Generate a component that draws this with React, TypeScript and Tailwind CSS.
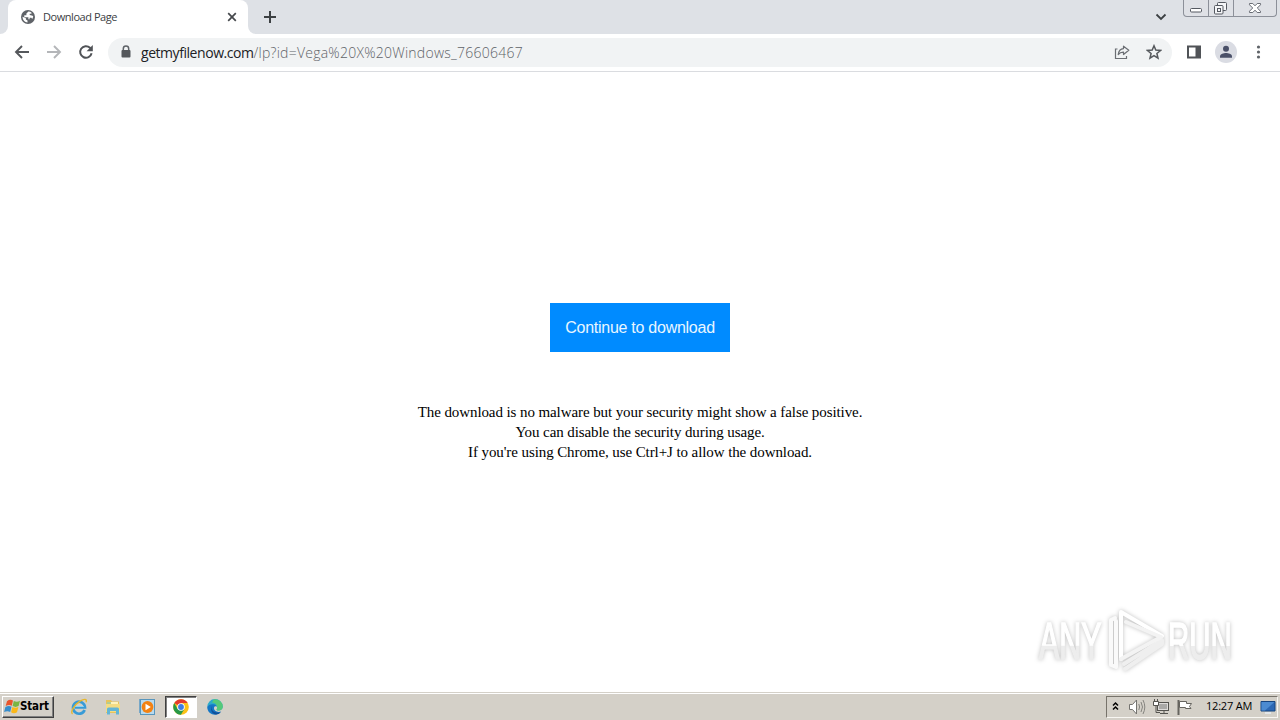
import type { ReactNode } from "react";

interface IconProps {
  size?: number;
  className?: string;
  children: ReactNode;
}

const Icon = ({ size = 16, className = "", children }: IconProps) => (
  <svg
    width={size}
    height={size}
    viewBox={`0 0 ${size} ${size}`}
    className={`block shrink-0 ${className}`}>
    {children}
  </svg>
);

const TabStrip = () => (
  <div className="flex h-[34px] bg-[#dee1e6]">
    <div className="flex w-2 bg-white">
      <div className="w-full rounded-br-lg bg-[#dee1e6]" />
    </div>
    <div className="flex w-60 items-center rounded-t-lg bg-white pl-3">
      <Icon className="-mt-px">
        <circle cx="8" cy="8" r="7" fill="#5f6368" />
        <path
          d="M8.4 2.6 6.4 4.5v1.7H4.3v2h4.1v2.1h1.2v-1.6h1.8l.8 1.2A5.4 5.4 0 0 0 13.2 7l-1.5-.4-2-.6V4.8h1.7l.2-1A5.4 5.4 0 0 0 8.4 2.6ZM2.6 7.7v1.1a5.5 5.5 0 0 0 4.9 4.6v-1.8l-1.6-1V9.2Z"
          fill="#fff"
        />
      </Icon>
      <span className="ml-[7px] w-[182px] whitespace-nowrap font-['Open_Sans',sans-serif] text-[11px] tracking-[-0.45px] text-[#3c4043]">
        Download Page
      </span>
      <Icon size={14} className="-mt-px">
        <path d="m3.2 3.2 7.6 7.6m0-7.6-7.6 7.6" stroke="#45484c" strokeWidth="1.7" />
      </Icon>
    </div>
    <div className="flex w-2 bg-white">
      <div className="w-full rounded-bl-lg bg-[#dee1e6]" />
    </div>
    <Icon className="ml-1.5 mt-[9px] mr-auto">
      <path d="M8 2v12M2 8h12" stroke="#3c4043" strokeWidth="2" />
    </Icon>
    <Icon size={14} className="mr-[15px] mt-2.5">
      <path d="m2.5 4.5 4.5 4.5 4.5-4.5" fill="none" stroke="#3c4043" strokeWidth="1.8" />
    </Icon>
    <WindowControls />
  </div>
);

const WindowControls = () => (
  <div className="mr-[3px] flex h-[17px] w-[94px] rounded-b-[4px] border border-t-0 border-[#8c9099] bg-[#dfe1e6]">
    <div className="w-[25px] border-r border-[#8c9099]">
      <svg width="24" height="16" className="block">
        <rect x="6.5" y="8.5" width="11" height="3.5" rx="1" fill="#fff" stroke="#555961" />
      </svg>
    </div>
    <div className="w-[25px] border-r border-[#8c9099]">
      <svg width="24" height="16" className="block" fill="#f5f6f8" stroke="#555961">
        <rect x="8.5" y="2.5" width="9" height="8" rx="1" />
        <rect x="5.5" y="5.5" width="8.5" height="8.5" rx="1" />
        <rect x="8.5" y="8.5" width="3" height="3" />
      </svg>
    </div>
    <svg width="42" height="16" className="block">
      <path
        d="M15.5 3.5h3.3l2.2 2.3 2.2-2.3h3.3v1.3L23.3 8l3.2 3.2v1.3h-3.3L21 10.2l-2.2 2.3h-3.3v-1.3L18.7 8l-3.2-3.2z"
        fill="#fff"
        stroke="#686c74"
      />
    </svg>
  </div>
);

const Toolbar = () => (
  <div className="flex h-[38px] items-center border-b border-[#dadce0] bg-white pl-3.5 pr-3.5">
    <Icon className="-mt-px mr-4">
      <path d="M15 8H2m6-6L2 8l6 6" fill="none" stroke="#55585c" strokeWidth="1.9" />
    </Icon>
    <Icon className="-mt-px mr-4">
      <path d="M1 8h13M8 2l6 6-6 6" fill="none" stroke="#b4b6b9" strokeWidth="1.9" />
    </Icon>
    <Icon className="-mt-px mr-3.5">
      <path d="M13.6 9.3A5.8 5.8 0 1 1 12 3.8L13.5 5" fill="none" stroke="#505357" strokeWidth="2" />
      <path d="M14.8 1v6.2H8.6z" fill="#505357" />
    </Icon>
    <div className="flex h-[29px] w-[1064px] items-center rounded-full bg-[#f1f3f4] pl-2.5 pr-2.5">
      <Icon className="-mt-px">
        <path d="M5.3 7V4.8a2.7 2.7 0 0 1 5.4 0V7" fill="none" stroke="#5f6368" strokeWidth="1.5" />
        <rect x="3.5" y="6" width="9" height="7.5" rx="1" fill="#55585c" />
      </Icon>
      <span className="ml-[7px] mr-auto whitespace-nowrap font-['Open_Sans',sans-serif] text-[14px] font-light tracking-[0.25px] text-[#5f6368]">
        <span className="font-normal tracking-[-0.45px] text-[#202124]">getmyfilenow.com</span>
        /lp?id=Vega%20X%20Windows_76606467
      </span>
      <Icon className="-mt-px mr-4">
        <path d="M3.5 5H1.5v9.5h11V12" fill="none" stroke="#6b6e73" strokeWidth="1.2" />
        <path
          d="M9.5 2.2 14.8 6.3 9.5 10.5V8.1C7.3 8 5.5 8.9 4.2 10.6 4.6 7.3 6.3 4.9 9.5 4.6Z"
          fill="none"
          stroke="#6b6e73"
          strokeWidth="1.2"
          strokeLinejoin="round"
        />
      </Icon>
      <Icon className="-mt-px">
        <path
          d="m8 1.8 1.8 4.3 4.7.4-3.6 3 1.1 4.6L8 11.6l-4 2.5 1.1-4.6-3.6-3 4.7-.4z"
          fill="none"
          stroke="#55585c"
          strokeWidth="1.5"
        />
      </Icon>
    </div>
    <Icon className="-mt-px ml-3.5">
      <path d="M1 1.5h14v13H1zM3 3.5v9h6.5v-9z" fill="#505357" fillRule="evenodd" />
    </Icon>
    <Icon size={22} className="-mt-px ml-[13px]">
      <circle cx="11" cy="11" r="11" fill="#dadce3" />
      <circle cx="11" cy="7.8" r="3" fill="#4a5068" />
      <path d="M5 16.8v-1.4c0-2.3 3.8-3.3 6-3.3s6 1 6 3.3v1.4z" fill="#4a5068" />
    </Icon>
    <Icon className="-mt-px ml-[13px]">
      <g fill="#5f6368">
        <circle cx="8.5" cy="3" r="1.6" />
        <circle cx="8.5" cy="8" r="1.6" />
        <circle cx="8.5" cy="13" r="1.6" />
      </g>
    </Icon>
  </div>
);

const Watermark = () => (
  <svg
    width="210"
    height="76"
    viewBox="1030 603 210 76"
    className="absolute right-10 bottom-[13px] drop-shadow-[0_0_2px_rgba(0,0,0,0.25)]">
    <defs>
      <linearGradient id="wm-fill" x1="0" y1="0" x2="0" y2="1">
        <stop offset="0.58" stopColor="#fff" />
        <stop offset="0.59" stopColor="#ededed" />
      </linearGradient>
    </defs>
    <g
      fill="url(#wm-fill)"
      stroke="url(#wm-fill)"
      strokeWidth="1.6"
      fontFamily="Liberation Sans, sans-serif"
      fontSize="52">
      <text transform="translate(1039 659) scale(0.585 1)">ANY</text>
      <text transform="translate(1168 659) scale(0.565 1)">RUN</text>
    </g>
    <g fill="none" strokeLinejoin="round" strokeLinecap="round" strokeWidth="4">
      <path d="M1115 618 1111 620V665L1116 667V621" stroke="#fafafa" />
      <path d="m1125 669 37-25v-4l-38 24" stroke="#efefef" />
      <path d="M1121 659V612L1162 636" stroke="#fff" />
      <path d="m1121 659 40-22-35-15" stroke="#f3f3f3" />
    </g>
  </svg>
);

const Page = () => (
  <main className="relative flex h-[620px] flex-col items-center bg-white pt-[231px]">
    <button className="h-[49px] w-[180px] whitespace-nowrap bg-[#008bff] font-['Liberation_Sans',sans-serif] text-[16px] tracking-[-0.26px] text-[#e8f6ff]">
      Continue to download
    </button>
    <p className="mt-[50px] whitespace-nowrap text-center font-['Liberation_Serif',serif] text-[15px] leading-5 tracking-[-0.09px] text-black">
      The download is no malware but your security might show a false positive.
      <br />
      You can disable the security during usage.
      <br />
      If you're using Chrome, use Ctrl+J to allow the download.
    </p>
    <Watermark />
  </main>
);

const WindowsFlag = () => (
  <Icon size={17}>
    <path d="M3 3.2Q6 .8 9 2.6L7.8 7.8Q5 6.2 1.7 8.1z" fill="#e9552c" />
    <path d="M9.8 3Q13 4.5 16 2.8l-1.4 5.3Q11.5 9.7 8.6 8.1z" fill="#79b543" />
    <path d="M1.4 9Q4.6 7.3 7.5 8.7L6.2 14Q3.4 12.4.1 14.1z" fill="#368dcc" />
    <path d="M8.4 9.1q3 1.5 6 0L13 14.3q-3.1 1.7-5.9 0z" fill="#fbb818" />
  </Icon>
);

const ExplorerIcon = () => (
  <Icon size={18}>
    <path d="M14.6 11.9A6 6 0 1 1 15 9.5H5" fill="none" stroke="#389bd7" strokeWidth="2.7" />
    <path d="M4.8 8.5h9" stroke="#8dd4f5" strokeWidth="1" />
    <path
      d="M2.6 15.8C-.4 14 4.8 6.7 10 3.2 13.8.7 17.4.4 16.1 4.3"
      fill="none"
      stroke="#e7b72d"
      strokeWidth="1.4"
    />
  </Icon>
);

const FolderIcon = () => (
  <Icon size={18}>
    <path d="M2 2h5l1 1.5h7V15H2z" fill="#e7c45c" />
    <path d="M3 4h11v8H3z" fill="#fff3bb" />
    <path d="M2 6h14v8H2z" fill="#f4dc83" />
    <path d="M3 16.5V11q0-1.5 1.5-1.5h9q1.5 0 1.5 1.5v5.5h-3V13H6v3.5z" fill="#63b5d6" />
    <path d="M3 5h4" stroke="#62a66a" />
  </Icon>
);

const MediaIcon = () => (
  <Icon size={18}>
    <rect x="1.5" y="1.5" width="12" height="13" fill="#d0e8f5" stroke="#77a7c7" />
    <rect x="2.5" y="1.5" width="14" height="15" fill="#b8daef" stroke="#5896bd" />
    <circle cx="9.5" cy="9" r="5.9" fill="#f38213" />
    <path d="m7.5 5.8 5.3 3.2-5.3 3.2z" fill="#fff" />
  </Icon>
);

const ChromeIcon = () => (
  <Icon size={16}>
    <circle cx="8" cy="8" r="7.8" fill="#fbc116" />
    <path d="M8 8 1.25 4.1a7.8 7.8 0 0 1 13.5 0H8z" fill="#e33b2e" />
    <path d="m8 8-.1 7.8A7.8 7.8 0 0 1 1.25 4.1L4.6 10z" fill="#279847" />
    <path d="M7.9 15.8 11.4 10 8 8l-3.4 2z" fill="#279847" />
    <circle cx="8" cy="8" r="3.8" fill="#fff" />
    <circle cx="8" cy="8" r="2.9" fill="#3d7de4" />
  </Icon>
);

const EdgeIcon = () => (
  <Icon size={18}>
    <path
      d="M1.2 9a7.8 7.8 0 0 1 15.6-.2c0 2.4-1.9 3.8-4.2 3.8-1.8 0-2.4-.7-1.8-1.5.9-1.2.4-4.1-3.4-4.1C4.6 7 2 7.6 1.2 9Z"
      fill="#2cabc9"
    />
    <path
      d="M8 1.3a7.8 7.8 0 0 1 8.8 7.5c0 2.4-1.9 3.8-4.2 3.8-1.8 0-2.4-.7-1.8-1.5C12 8 9.8 4.7 6 4.5Z"
      fill="#55c979"
    />
    <path
      d="M1.2 9C1.8 7.4 4.5 6 7.2 6.3c2 .2 3.4 1.2 3.8 2.6-1-.9-2.6-.7-3 .8-.6 2.3 2.5 5.3 7.2 3.8C11.5 18.8 1.4 17.4 1.2 9Z"
      fill="#1476c5"
    />
    <path
      d="M6.1 8.2c-1.6 4 2.5 7.6 8.6 6-3 3.4-8.8 2.9-9.4-1.9-.2-1.6-.1-3.1.8-4.1Z"
      fill="#115099"
    />
  </Icon>
);

const Tray = () => (
  <div className="ml-auto flex h-[22px] w-[172px] items-center border border-t-[#77736b] border-l-[#77736b] border-r-[#f8f6f2] border-b-[#f8f6f2] pl-1">
    <Icon size={10} className="mb-0.5">
      <path d="M2 4.5 4.5 2 7 4.5M2 8.5 4.5 6 7 8.5" fill="none" stroke="#000" strokeWidth="1.5" />
    </Icon>
    <Icon size={18} className="ml-[7px]">
      <path d="M1.5 6.5h3L8.5 2v14L4.5 11.5h-3z" fill="#fff" stroke="#74736f" />
      <path d="M10.8 6q1.6 3 0 6M13 4q3 5 0 10m2-12q3.6 7 0 14" fill="none" stroke="#85847f" />
    </Icon>
    <Icon size={18} className="ml-1.5">
      <rect x="5.5" y="4.5" width="11" height="8" fill="#dedcda" stroke="#55534f" />
      <path d="M7 6h8v5H7z" fill="#aaa9a7" />
      <path d="M8 15.5h8M12 13v3" stroke="#55534f" />
      <path d="M2.5 1v2m3-2v2M1.5 3.5h5v4h-5zM4 8v6.5h4" fill="none" stroke="#55534f" />
      <path d="M2 4h4v3H2z" fill="#fff" />
    </Icon>
    <Icon size={18} className="ml-1.5">
      <path d="M2.5 2v15" stroke="#66645f" strokeWidth="2" />
      <path d="M3.5 3.5h7v2h5l-2 3 1.5 2H9.5v-1h-6z" fill="#fff" stroke="#66645f" />
    </Icon>
    <span className="ml-3 w-[54px] whitespace-nowrap font-['Open_Sans',sans-serif] text-[11px] tracking-[-0.2px] text-black">
      12:27 AM
    </span>
    <Icon size={16}>
      <path d="M1 2.5h14v9.5H1z" fill="#2d68b4" stroke="#17447e" />
      <path d="M1.5 3h13L5 11.5H1.5z" fill="#4c8bd1" />
      <path d="M5 14h6" stroke="#e8eef4" strokeWidth="1.5" />
    </Icon>
  </div>
);

const Taskbar = () => (
  <footer className="flex h-7 items-center border-t border-[#d4d0c8] bg-[#d4d0c8] pl-0.5 pr-0.5 shadow-[inset_0_1px_0_#fff]">
    <button className="flex h-[22px] w-[52px] items-center border border-t-white border-l-white border-r-[#404040] border-b-[#404040] pl-px shadow-[inset_-1px_-1px_0_#808080]">
      <WindowsFlag />
      <span className="-ml-px font-['DejaVu_Sans_Condensed','DejaVu_Sans',sans-serif] text-[11.5px] font-bold tracking-[-0.15px] text-black">
        Start
      </span>
    </button>
    <div className="ml-4 flex items-center gap-4">
      <ExplorerIcon />
      <FolderIcon />
      <MediaIcon />
    </div>
    <div className="ml-[9px] flex h-[22px] w-8 items-center justify-center border border-t-[#404040] border-l-[#404040] border-r-white border-b-white bg-white shadow-[inset_1px_1px_0_#808080]">
      <ChromeIcon />
    </div>
    <div className="ml-[9px]">
      <EdgeIcon />
    </div>
    <Tray />
  </footer>
);

const App = () => (
  <div className="h-[720px] w-[1280px] overflow-hidden">
    <TabStrip />
    <Toolbar />
    <Page />
    <Taskbar />
  </div>
);

export default App;
